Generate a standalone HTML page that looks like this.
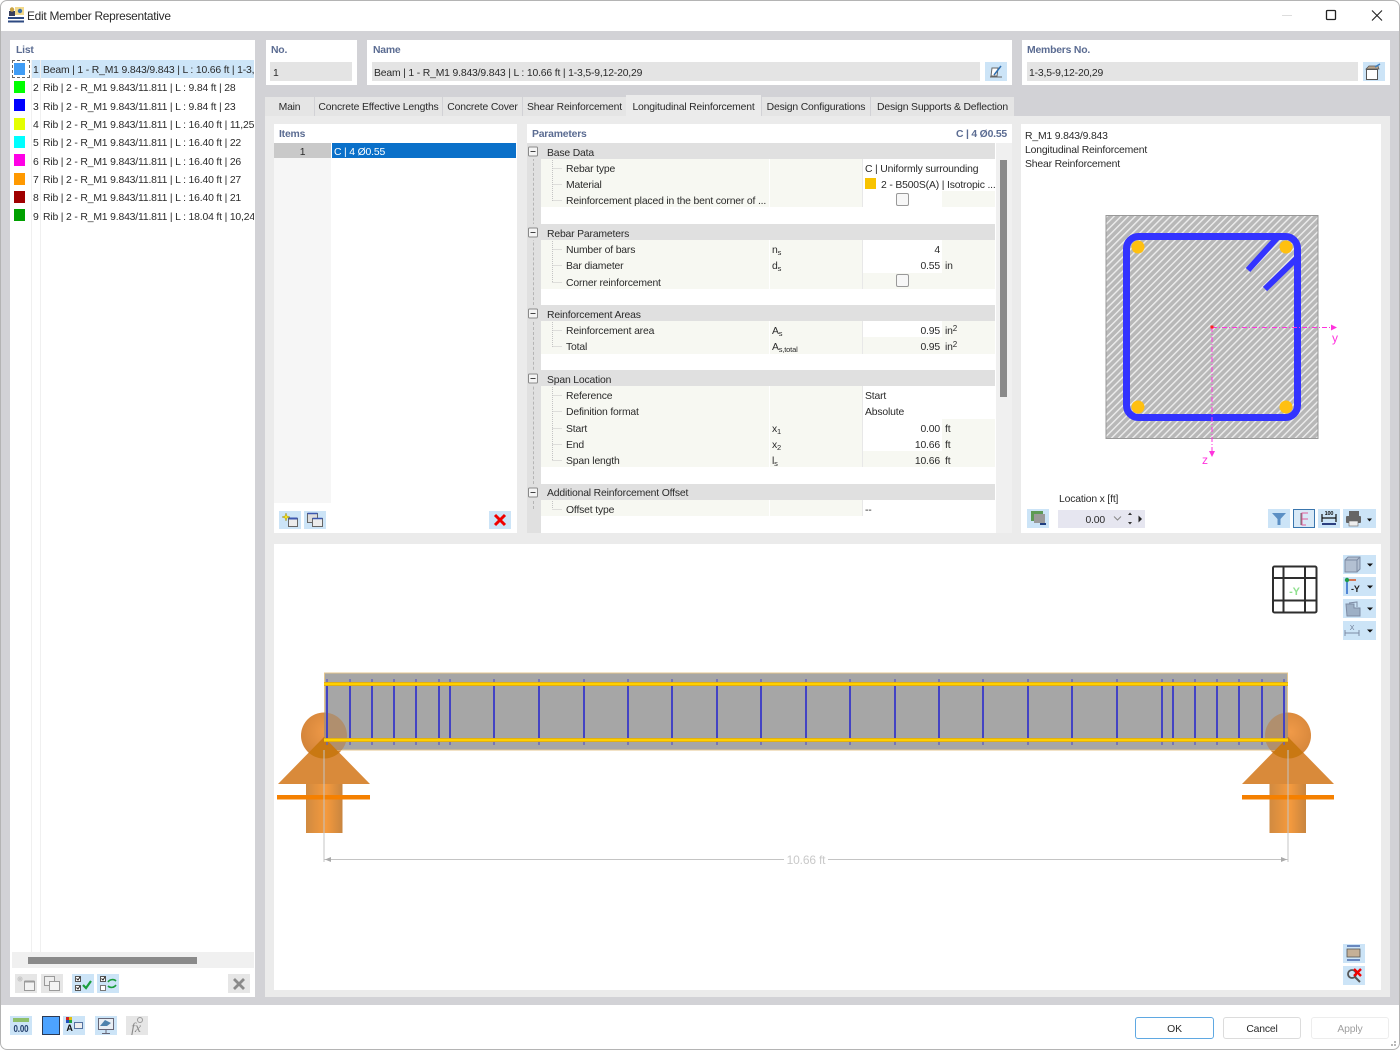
<!DOCTYPE html>
<html><head><meta charset="utf-8"><title>Edit Member Representative</title>
<style>
html,body{margin:0;padding:0;width:1400px;height:1050px;overflow:hidden;background:#fff}
body{font-family:"Liberation Sans",sans-serif;font-size:10.4px;letter-spacing:-.17px;color:#2a2a2a;position:relative}
.b{position:absolute}
.t{position:absolute;white-space:nowrap;line-height:14px;height:14px;margin-top:4px}
.h{font-weight:bold;color:#5b6c92;font-size:10.4px;letter-spacing:-.2px;margin-top:2px}
.r{text-align:right}
sub{font-size:7.5px;vertical-align:-2px;line-height:0}
sup{font-size:8px;vertical-align:3px;line-height:0}
svg{position:absolute;left:0;top:0}
.clip{position:absolute;overflow:hidden;white-space:nowrap;margin-top:4px}
.tab{position:absolute;top:97px;height:19px;background:#e5e5e5;line-height:22px;text-align:center;white-space:nowrap}
</style></head><body>
<!-- window -->
<div class="b" style="left:0;top:0;width:1398px;height:1048px;border:1px solid #b4b4b4;border-radius:7px;background:#fff"></div>
<div class="b" style="left:1px;top:31px;width:1398px;height:974px;background:#d2d2d6"></div>
<div class="t" style="left:27px;top:5px;font-size:11.9px;letter-spacing:-.27px">Edit Member Representative</div>

<!-- list panel -->
<div class="b" style="left:10px;top:40px;width:245px;height:957px;background:#fff"></div>
<div class="t h" style="left:16px;top:42px">List</div>
<div class="b" style="left:31px;top:60px;width:223px;height:18px;background:#cde5f8"></div>
<div class="b" style="left:31px;top:60px;width:1px;height:892px;background:#f0f0f0"></div>
<div class="b" style="left:40px;top:60px;width:1px;height:892px;background:#f0f0f0"></div>
<div class="b" style="left:12px;top:60px;width:18px;height:18px;border:1px dashed #666;box-sizing:border-box;background:#fff"></div>
<div class="b" style="left:14px;top:63px;width:11px;height:12px;background:#3f9cf5"></div>
<div class="b" style="left:14px;top:81px;width:11px;height:12px;background:#00ff00"></div>
<div class="b" style="left:14px;top:99px;width:11px;height:12px;background:#0000ff"></div>
<div class="b" style="left:14px;top:118px;width:11px;height:12px;background:#e4ff00"></div>
<div class="b" style="left:14px;top:136px;width:11px;height:12px;background:#00ffff"></div>
<div class="b" style="left:14px;top:154px;width:11px;height:12px;background:#ff00e6"></div>
<div class="b" style="left:14px;top:173px;width:11px;height:12px;background:#ff9900"></div>
<div class="b" style="left:14px;top:191px;width:11px;height:12px;background:#a00000"></div>
<div class="b" style="left:14px;top:209px;width:11px;height:12px;background:#00a000"></div>
<div class="t" style="left:33px;top:60px;width:8px">1</div><div class="clip" style="left:43px;top:60px;width:211px;height:14px;line-height:14px">Beam | 1 - R_M1 9.843/9.843 | L : 10.66 ft | 1-3,5-9,12-20,29</div>
<div class="t" style="left:33px;top:78px">2</div><div class="clip" style="left:43px;top:78px;width:211px;height:14px;line-height:14px">Rib | 2 - R_M1 9.843/11.811 | L : 9.84 ft | 28</div>
<div class="t" style="left:33px;top:97px">3</div><div class="clip" style="left:43px;top:97px;width:211px;height:14px;line-height:14px">Rib | 2 - R_M1 9.843/11.811 | L : 9.84 ft | 23</div>
<div class="t" style="left:33px;top:115px">4</div><div class="clip" style="left:43px;top:115px;width:211px;height:14px;line-height:14px">Rib | 2 - R_M1 9.843/11.811 | L : 16.40 ft | 11,25</div>
<div class="t" style="left:33px;top:133px">5</div><div class="clip" style="left:43px;top:133px;width:211px;height:14px;line-height:14px">Rib | 2 - R_M1 9.843/11.811 | L : 16.40 ft | 22</div>
<div class="t" style="left:33px;top:152px">6</div><div class="clip" style="left:43px;top:152px;width:211px;height:14px;line-height:14px">Rib | 2 - R_M1 9.843/11.811 | L : 16.40 ft | 26</div>
<div class="t" style="left:33px;top:170px">7</div><div class="clip" style="left:43px;top:170px;width:211px;height:14px;line-height:14px">Rib | 2 - R_M1 9.843/11.811 | L : 16.40 ft | 27</div>
<div class="t" style="left:33px;top:188px">8</div><div class="clip" style="left:43px;top:188px;width:211px;height:14px;line-height:14px">Rib | 2 - R_M1 9.843/11.811 | L : 16.40 ft | 21</div>
<div class="t" style="left:33px;top:207px">9</div><div class="clip" style="left:43px;top:207px;width:211px;height:14px;line-height:14px">Rib | 2 - R_M1 9.843/11.811 | L : 18.04 ft | 10,24</div>
<div class="b" style="left:12px;top:952px;width:242px;height:16px;background:#f0f0f0"></div>
<div class="b" style="left:28px;top:957px;width:169px;height:7px;background:#8a8a8a"></div>

<!-- top fields -->
<div class="b" style="left:266px;top:40px;width:91px;height:45px;background:#fff"></div>
<div class="t h" style="left:271px;top:42px">No.</div>
<div class="b" style="left:270px;top:62px;width:82px;height:19px;background:#e4e4e4"></div>
<div class="t" style="left:273px;top:63px">1</div>
<div class="b" style="left:367px;top:40px;width:645px;height:45px;background:#fff"></div>
<div class="t h" style="left:373px;top:42px">Name</div>
<div class="b" style="left:372px;top:62px;width:608px;height:19px;background:#e4e4e4"></div>
<div class="t" style="left:374px;top:63px">Beam | 1 - R_M1 9.843/9.843 | L : 10.66 ft | 1-3,5-9,12-20,29</div>
<div class="b" style="left:1022px;top:40px;width:368px;height:45px;background:#fff"></div>
<div class="t h" style="left:1027px;top:42px">Members No.</div>
<div class="b" style="left:1027px;top:62px;width:331px;height:19px;background:#e4e4e4"></div>
<div class="t" style="left:1029px;top:63px">1-3,5-9,12-20,29</div>

<!-- tabs -->
<div class="b" style="left:265px;top:116px;width:1125px;height:881px;background:#ebebeb"></div>
<div class="tab" style="left:265px;width:49px">Main</div>
<div class="tab" style="left:315px;width:127px">Concrete Effective Lengths</div>
<div class="tab" style="left:443px;width:79px">Concrete Cover</div>
<div class="tab" style="left:523px;width:103px">Shear Reinforcement</div>
<div class="tab" style="left:626px;top:95px;width:135px;height:21px;background:#ebebeb;line-height:26px">Longitudinal Reinforcement</div>
<div class="tab" style="left:762px;width:108px">Design Configurations</div>
<div class="tab" style="left:871px;width:143px">Design Supports &amp; Deflection</div>

<!-- items -->
<div class="b" style="left:274px;top:124px;width:243px;height:409px;background:#fff"></div>
<div class="t h" style="left:279px;top:126px">Items</div>
<div class="b" style="left:274px;top:143px;width:57px;height:360px;background:#f6f6f6"></div>
<div class="b" style="left:274px;top:143px;width:57px;height:15px;background:#c9c9c9"></div>
<div class="b" style="left:332px;top:143px;width:184px;height:15px;background:#0a70c9"></div>
<div class="t" style="left:274px;top:142px;width:57px;text-align:center">1</div>
<div class="t" style="left:334px;top:142px;color:#fff">C | 4 Ø0.55</div>

<!-- parameters -->
<div class="b" style="left:527px;top:124px;width:485px;height:409px;background:#fff"></div>
<div class="b" style="left:996px;top:143px;width:16px;height:390px;background:#f0f0f0"></div>
<div class="b" style="left:1000px;top:160px;width:7px;height:237px;background:#8a8a8a"></div>
<div class="t h" style="left:532px;top:126px">Parameters</div>
<div class="t h r" style="right:393px;top:126px">C | 4 Ø0.55</div>
<div class="b" style="left:527px;top:143px;width:14px;height:390px;background:#e0e0e0"></div>
<div class="b" style="left:533px;top:143px;width:0;height:366px;border-left:1px dashed #b5b5b5"></div>
<!-- bands -->
<div class="b" style="left:527px;top:143px;width:468px;height:16px;background:#e0e0e0"></div>
<div class="b" style="left:527px;top:224px;width:468px;height:16px;background:#e0e0e0"></div>
<div class="b" style="left:527px;top:305px;width:468px;height:16px;background:#e0e0e0"></div>
<div class="b" style="left:527px;top:370px;width:468px;height:16px;background:#e0e0e0"></div>
<div class="b" style="left:527px;top:484px;width:468px;height:16px;background:#e0e0e0"></div>
<!-- row blocks -->
<div class="b" style="left:541px;top:159px;width:454px;height:48px;background:#f7f8f2"></div>
<div class="b" style="left:541px;top:240px;width:454px;height:49px;background:#f7f8f2"></div>
<div class="b" style="left:541px;top:321px;width:454px;height:33px;background:#f7f8f2"></div>
<div class="b" style="left:541px;top:386px;width:454px;height:81px;background:#f7f8f2"></div>
<div class="b" style="left:541px;top:500px;width:454px;height:16px;background:#f7f8f2"></div>
<!-- white value cells -->
<div class="b" style="left:863px;top:159px;width:132px;height:32px;background:#fff"></div>
<div class="b" style="left:863px;top:191px;width:79px;height:16px;background:#fff"></div>
<div class="b" style="left:863px;top:240px;width:79px;height:33px;background:#fff"></div>
<div class="b" style="left:863px;top:321px;width:79px;height:16px;background:#fff"></div>
<div class="b" style="left:863px;top:386px;width:132px;height:33px;background:#fff"></div>
<div class="b" style="left:863px;top:419px;width:79px;height:32px;background:#fff"></div>
<div class="b" style="left:863px;top:500px;width:132px;height:16px;background:#fff"></div>
<!-- labels -->
<div class="t" style="left:547px;top:143px">Base Data</div>
<div class="t" style="left:566px;top:159px">Rebar type</div>
<div class="t" style="left:566px;top:175px">Material</div>
<div class="t" style="left:566px;top:191px">Reinforcement placed in the bent corner of ...</div>
<div class="t" style="left:547px;top:224px">Rebar Parameters</div>
<div class="t" style="left:566px;top:240px">Number of bars</div>
<div class="t" style="left:566px;top:256px">Bar diameter</div>
<div class="t" style="left:566px;top:273px">Corner reinforcement</div>
<div class="t" style="left:547px;top:305px">Reinforcement Areas</div>
<div class="t" style="left:566px;top:321px">Reinforcement area</div>
<div class="t" style="left:566px;top:337px">Total</div>
<div class="t" style="left:547px;top:370px">Span Location</div>
<div class="t" style="left:566px;top:386px">Reference</div>
<div class="t" style="left:566px;top:402px">Definition format</div>
<div class="t" style="left:566px;top:419px">Start</div>
<div class="t" style="left:566px;top:435px">End</div>
<div class="t" style="left:566px;top:451px">Span length</div>
<div class="t" style="left:547px;top:483px">Additional Reinforcement Offset</div>
<div class="t" style="left:566px;top:500px">Offset type</div>
<!-- symbols -->
<div class="t" style="left:772px;top:240px">n<sub>s</sub></div>
<div class="t" style="left:772px;top:256px">d<sub>s</sub></div>
<div class="t" style="left:772px;top:321px">A<sub>s</sub></div>
<div class="t" style="left:772px;top:337px">A<sub>s,total</sub></div>
<div class="t" style="left:772px;top:419px">x<sub>1</sub></div>
<div class="t" style="left:772px;top:435px">x<sub>2</sub></div>
<div class="t" style="left:772px;top:451px">l<sub>s</sub></div>
<!-- values -->
<div class="t" style="left:865px;top:159px">C | Uniformly surrounding</div>
<div class="b" style="left:865px;top:178px;width:11px;height:11px;background:#f8c300"></div>
<div class="t" style="left:881px;top:175px">2 - B500S(A) | Isotropic ...</div>
<div class="t r" style="left:863px;width:77px;top:240px">4</div>
<div class="t r" style="left:863px;width:77px;top:256px">0.55</div><div class="t" style="left:945px;top:256px">in</div>
<div class="t r" style="left:863px;width:77px;top:321px">0.95</div><div class="t" style="left:945px;top:321px">in<sup>2</sup></div>
<div class="t r" style="left:863px;width:77px;top:337px">0.95</div><div class="t" style="left:945px;top:337px">in<sup>2</sup></div>
<div class="t" style="left:865px;top:386px">Start</div>
<div class="t" style="left:865px;top:402px">Absolute</div>
<div class="t r" style="left:863px;width:77px;top:419px">0.00</div><div class="t" style="left:945px;top:419px">ft</div>
<div class="t r" style="left:863px;width:77px;top:435px">10.66</div><div class="t" style="left:945px;top:435px">ft</div>
<div class="t r" style="left:863px;width:77px;top:451px">10.66</div><div class="t" style="left:945px;top:451px">ft</div>
<div class="t" style="left:865px;top:500px">--</div>
<div class="b" style="left:896px;top:193px;width:11px;height:11px;border:1px solid #999;border-radius:2px;background:#f7f7f7"></div>
<div class="b" style="left:896px;top:274px;width:11px;height:11px;border:1px solid #999;border-radius:2px;background:#f7f7f7"></div>
<!-- column separators -->
<div class="b" style="left:769px;top:159px;width:1px;height:48px;background:#fff"></div>
<div class="b" style="left:862px;top:159px;width:1px;height:48px;background:#e8e8e8"></div>
<div class="b" style="left:769px;top:240px;width:1px;height:49px;background:#fff"></div>
<div class="b" style="left:862px;top:240px;width:1px;height:49px;background:#e8e8e8"></div>
<div class="b" style="left:769px;top:321px;width:1px;height:33px;background:#fff"></div>
<div class="b" style="left:862px;top:321px;width:1px;height:33px;background:#e8e8e8"></div>
<div class="b" style="left:769px;top:386px;width:1px;height:81px;background:#fff"></div>
<div class="b" style="left:862px;top:386px;width:1px;height:81px;background:#e8e8e8"></div>
<div class="b" style="left:769px;top:500px;width:1px;height:16px;background:#fff"></div>
<div class="b" style="left:862px;top:500px;width:1px;height:16px;background:#e8e8e8"></div>

<!-- preview -->
<div class="b" style="left:1021px;top:124px;width:360px;height:409px;background:#fff"></div>
<div class="t" style="left:1025px;top:126px">R_M1 9.843/9.843</div>
<div class="t" style="left:1025px;top:140px">Longitudinal Reinforcement</div>
<div class="t" style="left:1025px;top:154px">Shear Reinforcement</div>
<div class="t" style="left:1059px;top:489px">Location x [ft]</div>
<div class="b" style="left:1058px;top:510px;width:87px;height:18px;background:#e6e6f0"></div>
<div class="t r" style="left:1058px;width:47px;top:510px">0.00</div>

<!-- bottom panel -->
<div class="b" style="left:274px;top:544px;width:1107px;height:446px;background:#fff"></div>

<!-- footer -->
<div class="b" style="left:1135px;top:1017px;width:77px;height:20px;border:1px solid #5fa8e2;border-radius:3px;text-align:center;line-height:23px;background:#fff">OK</div>
<div class="b" style="left:1223px;top:1017px;width:76px;height:20px;border:1px solid #dcdcdc;border-radius:3px;text-align:center;line-height:23px;background:#fff">Cancel</div>
<div class="b" style="left:1311px;top:1017px;width:76px;height:20px;border:1px solid #ededed;border-radius:3px;text-align:center;line-height:23px;background:#fff;color:#a0a0a0">Apply</div>

<svg width="1400" height="1050" viewBox="0 0 1400 1050" font-family="Liberation Sans, sans-serif">
<defs>
<pattern id="hat" width="5" height="5" patternUnits="userSpaceOnUse" patternTransform="rotate(45)"><rect width="5" height="5" fill="#b8b8b8"/><rect x="0" width="1.4" height="5" fill="#ededed"/></pattern>
<linearGradient id="stem" x1="0" x2="1" y1="0" y2="0"><stop offset="0" stop-color="#d08a40"/><stop offset=".55" stop-color="#f59a3e"/><stop offset="1" stop-color="#c8853f"/></linearGradient>
<radialGradient id="ball" cx=".55" cy=".42" r=".65"><stop offset="0" stop-color="#f09a48"/><stop offset="1" stop-color="#d08238"/></radialGradient>
<clipPath id="cl"><circle cx="324" cy="735.500" r="23"/></clipPath>
<clipPath id="cr"><circle cx="1288" cy="735.500" r="23"/></clipPath>
<clipPath id="bm"><rect x="324" y="673" width="964" height="77"/></clipPath>
</defs>

<!-- window buttons -->
<path d="M1282 15.500h10" stroke="#ddd" fill="none"/>
<rect x="1326.500" y="10.500" width="9" height="9" fill="none" stroke="#222" stroke-width="1.300" rx="1"/>
<path d="M1372 10.500l10 10M1382 10.500l-10 10" stroke="#222" stroke-width="1.100"/>
<!-- title icon -->
<rect x="15" y="7" width="9" height="8" fill="#f2d98a"/><circle cx="20" cy="11" r="2.200" fill="#3a6ea8"/>
<rect x="9" y="11" width="6" height="5" fill="#39405e"/><circle cx="12" cy="9.500" r="2.200" fill="#c9a343"/>
<path d="M8 18h16M8 21.500h16" stroke="#2e4a82" stroke-width="2"/>

<!-- tree icons -->
<g fill="#f4f4f4" stroke="#8a8a8a"><rect x="528.500" y="147" width="9" height="9" rx="1"/><rect x="528.500" y="228" width="9" height="9" rx="1"/><rect x="528.500" y="309" width="9" height="9" rx="1"/><rect x="528.500" y="374" width="9" height="9" rx="1"/><rect x="528.500" y="488" width="9" height="9" rx="1"/></g>
<path d="M530.500 151.500h5M530.500 232.500h5M530.500 313.500h5M530.500 378.500h5M530.500 492.500h5" stroke="#444"/>
<g stroke="#c4c4c4" fill="none" stroke-dasharray="1 1">
<path d="M552.500 160v41M552.500 168.500h10M552.500 184.500h10M552.500 200.500h10"/>
<path d="M552.500 241v41M552.500 249.500h10M552.500 265.500h10M552.500 282.500h10"/>
<path d="M552.500 322v25M552.500 330.500h10M552.500 346.500h10"/>
<path d="M552.500 387v73M552.500 395.500h10M552.500 411.500h10M552.500 428.500h10M552.500 444.500h10M552.500 460.500h10"/>
<path d="M552.500 501v8M552.500 509.500h10"/>
</g>

<!-- name / members buttons -->
<rect x="985" y="62" width="22" height="19" fill="#cce4f7"/>
<path d="M990 77h12M991 76l1-8h6l-1 8z" fill="#fff" stroke="#666"/><path d="M994 75l7-9" stroke="#2f6fb0" stroke-width="1.500"/>
<rect x="1363" y="62" width="22" height="19" fill="#cce4f7"/>
<rect x="1366.500" y="69.500" width="11" height="10" fill="#fff" stroke="#555"/><path d="M1366 69l3-3h9l1 3z" fill="#b9a58c" stroke="#555" stroke-width=".7"/><path d="M1375 67l5-3" stroke="#3d7fc0" stroke-width="1.500"/>

<!-- list toolbar -->
<rect x="15" y="974" width="22" height="19" fill="#e6e6e6"/><rect x="41" y="974" width="22" height="19" fill="#e6e6e6"/>
<rect x="72" y="974" width="22" height="19" fill="#cce4f7"/><rect x="97" y="974" width="22" height="19" fill="#cce4f7"/>
<rect x="228" y="974" width="22" height="19" fill="#e6e6e6"/>
<rect x="24.500" y="981.500" width="10" height="9" fill="#f2f2f2" stroke="#9a9a9a"/><path d="M24.500 981.500h10" stroke="#9a9a9a" stroke-width="2"/><path d="M20 976v6M17 979h6M18 977l4 4M22 977l-4 4" stroke="#c8c8c8"/>
<rect x="44.500" y="976.500" width="10" height="9" fill="#eee" stroke="#9a9a9a"/><rect x="49.500" y="981.500" width="10" height="9" fill="#f4f4f4" stroke="#9a9a9a"/>
<rect x="75.500" y="976.500" width="5" height="5" fill="#fff" stroke="#555"/><rect x="75.500" y="985.500" width="5" height="5" fill="#fff" stroke="#555"/><path d="M76.500 978.500l1.500 1.500 2-3M76.500 987.500l1.500 1.500 2-3" stroke="#222" fill="none"/><path d="M83 985l3 3 5-7" stroke="#1a9e3c" stroke-width="2.200" fill="none"/>
<rect x="100.500" y="976.500" width="5" height="5" fill="#fff" stroke="#555"/><rect x="100.500" y="985.500" width="5" height="5" fill="#fff" stroke="#777"/><path d="M101.500 978.500l1.500 1.500 2-3" stroke="#222" fill="none"/><path d="M108 982c2-3 6-3 8-1M116 985c-2 3-6 3-8 1" stroke="#1a9e3c" stroke-width="1.600" fill="none"/>
<path d="M234 979l10 10M244 979l-10 10" stroke="#8a8a8a" stroke-width="2.800"/>

<!-- items toolbar -->
<rect x="279" y="511" width="22" height="18" fill="#cce4f7"/><rect x="304" y="511" width="22" height="18" fill="#cce4f7"/><rect x="489" y="511" width="22" height="18" fill="#cce4f7"/>
<rect x="288.500" y="518.500" width="9" height="8" fill="#ececec" stroke="#666"/><path d="M288.500 518.500h9" stroke="#3e58b0" stroke-width="2"/><path d="M286 513l1 3 3 1-3 1-1 3-1-3-3-1 3-1z" fill="#f4e01e" stroke="#9c8d20" stroke-width=".5"/>
<rect x="307.500" y="513.500" width="10" height="9" fill="#ddd" stroke="#666"/><rect x="312.500" y="518.500" width="10" height="8" fill="#ececec" stroke="#666"/><path d="M312.500 518.500h10M307.500 513.500h10" stroke="#3e58b0" stroke-width="1.600"/>
<path d="M495 515l10 10M505 515l-10 10" stroke="#f00000" stroke-width="3"/>

<!-- cross section -->
<rect x="1106" y="215.500" width="212" height="223" fill="url(#hat)" stroke="#999"/>
<rect x="1126.500" y="236.500" width="171" height="181" rx="12" fill="none" stroke="#3333ff" stroke-width="7"/>
<path d="M1277 238l-29 32M1297 258l-32 31" stroke="#3333ff" stroke-width="6" fill="none"/>
<g fill="#ffc010"><circle cx="1138" cy="247" r="6.500"/><circle cx="1286" cy="247" r="6.500"/><circle cx="1138" cy="407" r="6.500"/><circle cx="1286" cy="407" r="6.500"/></g>
<path d="M1212 327.500h122M1212 327v126" stroke="#ff33dd" stroke-dasharray="5 2 1 2" fill="none"/>
<path d="M1331 324.500l6 3-6 3zM1209 451l3 6 3-6z" fill="#ff33dd"/>
<rect x="1210.500" y="325.500" width="3" height="3" fill="#ff2020"/>
<text x="1332" y="342" font-size="12" fill="#ff33dd">y</text>
<text x="1202" y="464" font-size="12" fill="#ff33dd">z</text>

<!-- preview toolbar -->
<rect x="1027" y="509" width="22" height="19" fill="#cce4f7"/>
<rect x="1031" y="511" width="12" height="10" fill="#5d9a55"/><rect x="1034" y="514" width="11" height="9" fill="#9a9a9a"/><path d="M1040 524h6" stroke="#1f3f80" stroke-width="2"/>
<path d="M1114 516.500l3.500 3.500 3.500-3.500" stroke="#888" fill="none"/>
<path d="M1128 515l2-2.500 2 2.500zM1128 522l2 2.500 2-2.500z" fill="#333"/>
<path d="M1138.500 515.500l3.500 3.500-3.500 3.500z" fill="#222"/>
<rect x="1268" y="509" width="22" height="19" fill="#cce4f7"/>
<path d="M1272 513h14l-5.500 6v6h-3v-6z" fill="#5b8fc4"/>
<rect x="1293.500" y="509.500" width="21" height="18" fill="#d8e9f7" stroke="#3a76ae"/>
<path d="M1308 513h-6v12h4M1302 519h6" stroke="#e0609a" fill="none"/><path d="M1301 513v12" stroke="#666"/>
<rect x="1318" y="509" width="22" height="19" fill="#cce4f7"/>
<path d="M1322 518h14M1322 514v8M1336 514v8" stroke="#111" stroke-width="1.200" fill="none"/><path d="M1322 524h14" stroke="#2c3f80" stroke-width="2"/><text x="1329" y="515" font-size="5.500" font-weight="bold" text-anchor="middle" fill="#111">100</text>
<rect x="1343" y="509" width="33" height="19" fill="#cce4f7"/>
<rect x="1349" y="511" width="10" height="5" fill="#666"/><rect x="1346" y="516" width="15" height="7" rx="1" fill="#666"/><rect x="1349" y="521" width="9" height="5" fill="#eee" stroke="#666" stroke-width=".6"/>
<path d="M1367 518.500h5l-2.500 3z" fill="#111"/>

<!-- supports (under the beam) -->
<path d="M324 737l46 47h-92z" fill="#d98a3a"/>
<rect x="306" y="784" width="36.500" height="49" fill="url(#stem)"/>
<rect x="277" y="795" width="93" height="4.500" fill="#f58000"/>
<path d="M1288 737l46 47h-92z" fill="#d98a3a"/>
<rect x="1269.500" y="784" width="36.500" height="49" fill="url(#stem)"/>
<rect x="1242" y="795" width="92" height="4.500" fill="#f58000"/>
<circle cx="324" cy="735.500" r="23" fill="url(#ball)"/>
<circle cx="1288" cy="735.500" r="23" fill="url(#ball)"/>

<!-- beam -->
<rect x="324.500" y="673" width="963" height="77" fill="#a6a6a6" stroke="#e4c68c"/>
<g clip-path="url(#bm)"><circle cx="324" cy="735.500" r="23" fill="#b08f6e"/><circle cx="1288" cy="735.500" r="23" fill="#b08f6e"/></g>
<path d="M324 737l46 47h-92z" fill="#c97812" clip-path="url(#cl)"/>
<path d="M1288 737l46 47h-92z" fill="#c97812" clip-path="url(#cr)"/>
<g stroke="#4343c4" stroke-width="2">
<path d="M327 686v52M350 686v52M372 686v52M394 686v52M416 686v52M439 686v52M450 686v52M494 686v52M539 686v52M584 686v52M628 686v52M672 686v52M717 686v52M761 686v52M806 686v52M850 686v52M895 686v52M939 686v52M983 686v52M1028 686v52M1072 686v52M1117 686v52M1162 686v52M1173 686v52M1195 686v52M1217 686v52M1239 686v52M1262 686v52M1284 686v52"/>
</g>
<g stroke="#6666b8" stroke-width="1.500">
<path d="M327 679v3M350 679v3M372 679v3M394 679v3M416 679v3M439 679v3M450 679v3M494 679v3M539 679v3M584 679v3M628 679v3M672 679v3M717 679v3M761 679v3M806 679v3M850 679v3M895 679v3M939 679v3M983 679v3M1028 679v3M1072 679v3M1117 679v3M1162 679v3M1173 679v3M1195 679v3M1217 679v3M1239 679v3M1262 679v3M1284 679v3"/>
<path d="M327 742v3M350 742v3M372 742v3M394 742v3M416 742v3M439 742v3M450 742v3M494 742v3M539 742v3M584 742v3M628 742v3M672 742v3M717 742v3M761 742v3M806 742v3M850 742v3M895 742v3M939 742v3M983 742v3M1028 742v3M1072 742v3M1117 742v3M1162 742v3M1173 742v3M1195 742v3M1217 742v3M1239 742v3M1262 742v3M1284 742v3"/>
</g>
<rect x="324" y="682" width="964" height="4" fill="#e2b010"/><rect x="324" y="683" width="964" height="2" fill="#ffd000"/>
<rect x="324" y="738" width="964" height="4" fill="#e2b010"/><rect x="324" y="739" width="964" height="2" fill="#ffd000"/>

<!-- dimension -->
<path d="M324 750v112M1288 750v112" stroke="#c4c4c4"/>
<path d="M324 859.500h964" stroke="#c4c4c4"/>
<path d="M325 859.500l6-2.500v5zM1287 859.500l-6-2.500v5z" fill="#aaa"/>
<rect x="784" y="852" width="44" height="14" fill="#fff"/>
<text x="806" y="864" font-size="12" text-anchor="middle" fill="#c9c9c9">10.66 ft</text>

<!-- nav cube -->
<g fill="none" stroke="#2e2e2e" stroke-width="2">
<rect x="1273" y="566.500" width="43.500" height="46" rx="1.500"/>
<path d="M1283.500 566.500v46M1305 566.500v46M1273 578h43.500M1273 600.500h43.500"/>
</g>
<text x="1294.500" y="595" font-size="11" font-weight="bold" text-anchor="middle" fill="#8fe08f">-Y</text>

<!-- view toolbar -->
<g fill="#cce4f7"><rect x="1343" y="555" width="33" height="19"/><rect x="1343" y="577" width="33" height="19"/><rect x="1343" y="599" width="33" height="19"/><rect x="1343" y="621" width="33" height="19"/></g>
<path d="M1345 560h12v12h-12zM1345 560l3-3h12v12l-3 3M1357 560l3-3" fill="#b3c0d2" stroke="#7d8ba4"/>
<path d="M1367 563.500h6l-3 3zM1367 585.500h6l-3 3zM1367 607.500h6l-3 3zM1367 629.500h6l-3 3z" fill="#111"/>
<path d="M1347 580v14" stroke="#2a66c8" stroke-width="1.500"/><path d="M1347 580h9" stroke="#d6501e" stroke-width="1.500"/><circle cx="1347" cy="580" r="2.200" fill="#1f9c4b"/><text x="1351" y="592" font-size="9" font-weight="bold" fill="#222">-Y</text>
<path d="M1346 604h8v4h6v8h-13z" fill="#9db0c6" stroke="#7d8ba4"/><path d="M1349 603l8-1v5" stroke="#7d8ba4" fill="none"/>
<path d="M1345 630v6M1359 630v6M1345 633h14" stroke="#7d8ba4" fill="none"/><text x="1352" y="630" font-size="7" text-anchor="middle" fill="#6d7b94">X</text>

<!-- side icons -->
<rect x="1343" y="944" width="22" height="19" fill="#cce4f7"/><rect x="1343" y="966" width="22" height="19" fill="#cce4f7"/>
<path d="M1347 946h13M1347 960h13" stroke="#2c4f9c" stroke-width="1.300"/><rect x="1347" y="949" width="13" height="8" fill="#c5b097" stroke="#555" stroke-width=".8"/>
<circle cx="1352" cy="974" r="4" fill="none" stroke="#555" stroke-width="1.800"/><path d="M1355 977l5 5" stroke="#555" stroke-width="2"/><path d="M1354 969l7 7M1361 969l-7 7" stroke="#f00000" stroke-width="2.400"/>

<!-- footer icons -->
<rect x="10" y="1016" width="22" height="19" fill="#cce4f7"/>
<rect x="13" y="1018" width="16" height="4" fill="#8fbf6b"/>
<text x="21" y="1032" font-size="10" font-weight="bold" text-anchor="middle" fill="#24406e" textLength="15" lengthAdjust="spacingAndGlyphs">0.00</text>
<rect x="42.500" y="1016.500" width="17" height="18" fill="#4da3ff" stroke="#2b3a55"/>
<rect x="63" y="1016" width="22" height="19" fill="#cce4f7"/>
<rect x="66" y="1017" width="3" height="3" fill="#d02020"/><rect x="69" y="1017" width="3" height="3" fill="#e0c010"/><rect x="66" y="1020" width="3" height="3" fill="#2050c0"/><rect x="69" y="1020" width="3" height="3" fill="#20a040"/>
<text x="69.500" y="1031" font-size="9" font-weight="bold" text-anchor="middle" fill="#111">A</text>
<rect x="74.500" y="1022.500" width="8" height="6" fill="#eee" stroke="#5672a0"/>
<rect x="95" y="1016" width="22" height="19" fill="#cce4f7"/>
<rect x="98.500" y="1018.500" width="15" height="11" fill="#e9eef4" stroke="#667"/><path d="M100 1026l5-6 6 3-4 3z" fill="#4f82ac"/><path d="M106 1030v3M102 1033.500h8" stroke="#667"/>
<rect x="126" y="1016" width="22" height="19" fill="#e6e6e6"/>
<text x="136" y="1032" font-size="14" font-style="italic" font-family="Liberation Serif, serif" text-anchor="middle" fill="#8a8a8a">fx</text>
<circle cx="140" cy="1020" r="2.500" fill="none" stroke="#9a9a9a"/>
<!-- resize grip -->
<g fill="#b8b8b8"><rect x="1394" y="1044" width="2" height="2"/><rect x="1391" y="1044" width="2" height="2"/><rect x="1394" y="1041" width="2" height="2"/></g>
</svg>
</body></html>
